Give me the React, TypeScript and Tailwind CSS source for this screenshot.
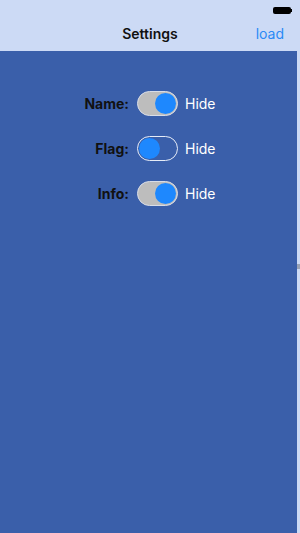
import React from "react";

function Toggle({ on }: { on: boolean }) {
  return (
    <div
      className={
        "relative w-[41px] h-[25px] rounded-full border " +
        (on ? "bg-[#bdbdbd] border-[#d8dde8]" : "bg-transparent border-[#e6ecf7]")
      }
    >
      <div
        className={
          "absolute top-[1px] w-[21px] h-[21px] rounded-full bg-[#1e88fe] " +
          (on ? "right-[1px]" : "left-[1px]")
        }
      />
    </div>
  );
}

function Row({ label, on }: { label: string; on: boolean }) {
  return (
    <div className="flex items-center h-[25px]">
      <div className="w-[129px] text-right text-[14px] font-bold text-[#111111]">{label}</div>
      <div className="ml-[8px]">
        <Toggle on={on} />
      </div>
      <div className="ml-[7px] text-[14px] text-white">Hide</div>
    </div>
  );
}

export default function App() {
  return (
    <div
      className="w-[300px] h-[533px] flex flex-col bg-[#ccdaf5] overflow-hidden"
      style={{ fontFamily: "Inter, 'Liberation Sans', sans-serif" }}
    >
      <div className="h-[51px] shrink-0 relative">
        <div className="h-[20px] flex justify-end items-center pr-[8px]">
          <div className="flex items-center">
            <div className="w-[18px] h-[7px] rounded-[2px] bg-black" />
            <div className="w-[1px] h-[3px] bg-black" />
          </div>
        </div>
        <div className="h-[26px] flex items-center justify-center relative">
          <span className="text-[14px] font-semibold text-[#111111]">Settings</span>
          <span className="absolute right-[16px] text-[14px] text-[#2a8af6]">load</span>
        </div>
      </div>
      <div className="flex-1 flex">
        <div className="flex-1 bg-[#3a5faa] flex flex-col pt-[40px] gap-[20px]">
          <Row label="Name:" on={true} />
          <Row label="Flag:" on={false} />
          <Row label="Info:" on={true} />
        </div>
        <div className="w-[3px] flex flex-col">
          <div className="h-[213px]" />
          <div className="h-[5px] bg-[#9aa3b5]" />
        </div>
      </div>
    </div>
  );
}
